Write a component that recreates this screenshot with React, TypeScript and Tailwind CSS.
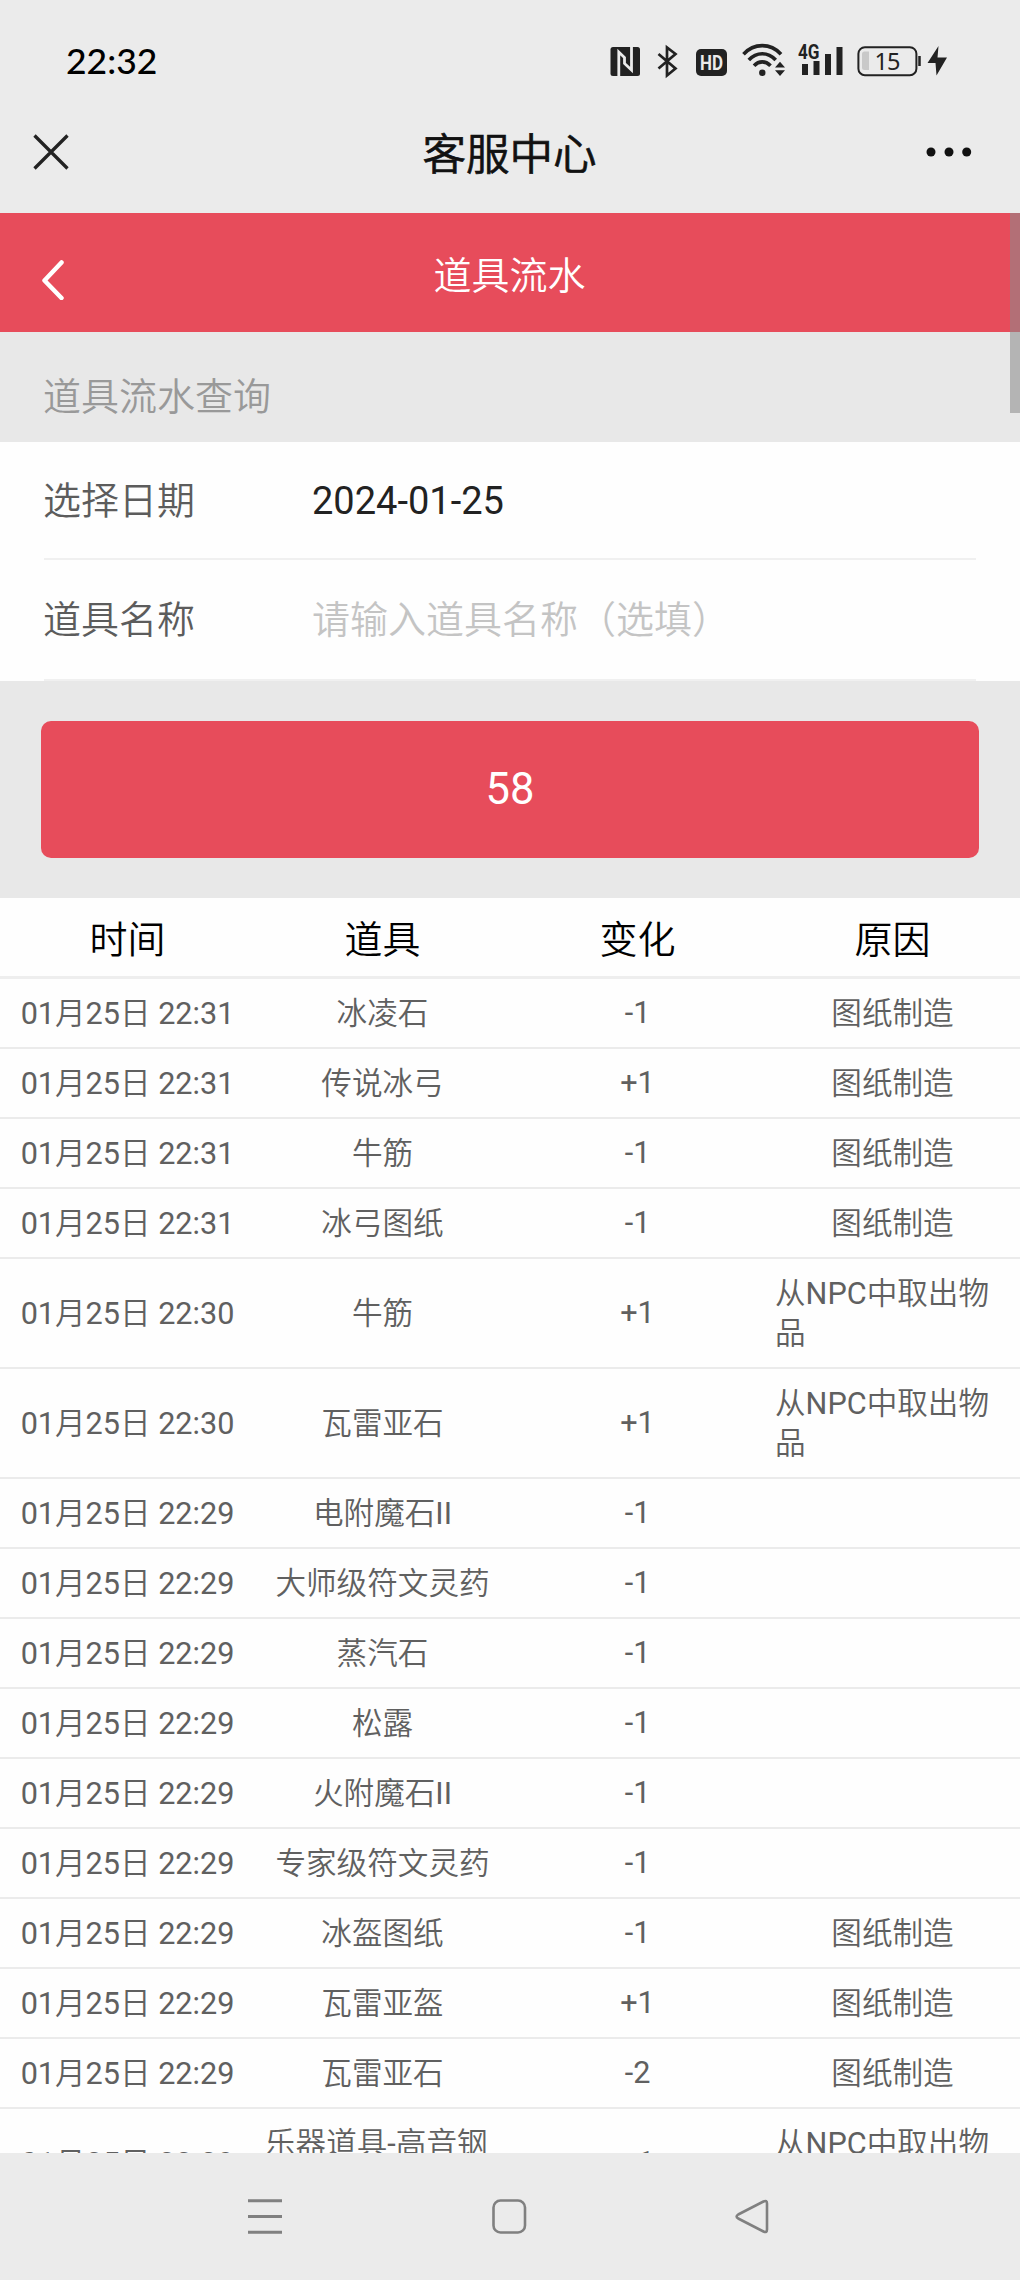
import type { ReactNode } from "react";

type Row = {
  time: string;
  item: string;
  change: string;
  reason?: string;
};

const rows: Row[] = [
  { time: "01月25日 22:31", item: "冰凌石", change: "-1", reason: "图纸制造" },
  { time: "01月25日 22:31", item: "传说冰弓", change: "+1", reason: "图纸制造" },
  { time: "01月25日 22:31", item: "牛筋", change: "-1", reason: "图纸制造" },
  { time: "01月25日 22:31", item: "冰弓图纸", change: "-1", reason: "图纸制造" },
  { time: "01月25日 22:30", item: "牛筋", change: "+1", reason: "从NPC中取出物品" },
  { time: "01月25日 22:30", item: "瓦雷亚石", change: "+1", reason: "从NPC中取出物品" },
  { time: "01月25日 22:29", item: "电附魔石II", change: "-1" },
  { time: "01月25日 22:29", item: "大师级符文灵药", change: "-1" },
  { time: "01月25日 22:29", item: "蒸汽石", change: "-1" },
  { time: "01月25日 22:29", item: "松露", change: "-1" },
  { time: "01月25日 22:29", item: "火附魔石II", change: "-1" },
  { time: "01月25日 22:29", item: "专家级符文灵药", change: "-1" },
  { time: "01月25日 22:29", item: "冰盔图纸", change: "-1", reason: "图纸制造" },
  { time: "01月25日 22:29", item: "瓦雷亚盔", change: "+1", reason: "图纸制造" },
  { time: "01月25日 22:29", item: "瓦雷亚石", change: "-2", reason: "图纸制造" },
  { time: "01月25日 22:29", item: "乐器道具-高音钢琴", change: "+1", reason: "从NPC中取出物品" },
];

function StatusIcons() {
  return (
    <div className="flex h-10 items-center text-[#222]">
      {/* NFC */}
      <svg width="30" height="40" viewBox="0 0 30 40">
        <rect x="0.5" y="7" width="29.5" height="29" rx="2.5" fill="currentColor" />
        <path d="M8.8 36V12L14.5 17.5V23.500L21.5 30V7" fill="none" stroke="#ebebeb" strokeWidth="2.8" />
      </svg>
      {/* Bluetooth */}
      <svg className="ml-[17px]" width="22" height="40" viewBox="0 0 22 40" fill="none" stroke="currentColor" strokeWidth="2.7">
        <path d="M1.5 14L18.5 28.5L10 35.5V7.5L18.5 14L1.5 28.5" />
      </svg>
      {/* HD */}
      <svg className="ml-[17px]" width="31" height="40" viewBox="0 0 31 40">
        <rect x="0" y="9" width="31" height="27" rx="5" fill="currentColor" />
        <text x="15.5" y="30" textAnchor="middle" fontSize="20.5" fontWeight="700" textLength="23" lengthAdjust="spacingAndGlyphs" fill="#ebebeb" className="font-[Roboto]">
          HD
        </text>
      </svg>
      {/* Wi-Fi */}
      <svg className="ml-[15px]" width="44" height="40" viewBox="0 0 44 40">
        <g fill="none" stroke="currentColor" strokeWidth="3.6">
          <path d="M1.5 14.2C12 2.8 28.5 2.8 39 14.2" />
          <path d="M6.8 20C14.5 11.6 26 11.6 33.7 20" />
          <path d="M12 25.8C17 20.6 23.5 20.6 28.5 25.8" />
        </g>
        <circle cx="20.3" cy="32.8" r="3.2" fill="currentColor" />
        <path d="M33 27.5L38 21.8L43 27.5ZM33 30.3L38 36L43 30.3Z" fill="currentColor" />
      </svg>
      {/* Signal */}
      <svg className="ml-3" width="46" height="40" viewBox="0 0 46 40" fill="currentColor">
        <text x="0" y="18.8" fontSize="20" fontWeight="700" textLength="21.5" lengthAdjust="spacingAndGlyphs" className="font-[Roboto]">
          4G
        </text>
        <rect x="4" y="24" width="6" height="11" />
        <rect x="15.5" y="21" width="6" height="14" />
        <rect x="27" y="14" width="6" height="21" />
        <rect x="38.5" y="7" width="6" height="28" />
      </svg>
      {/* Battery */}
      <svg className="ml-[13px]" width="91" height="40" viewBox="0 0 91 40">
        <rect x="1.4" y="7.2" width="58" height="28" rx="6.5" fill="none" stroke="currentColor" strokeWidth="2" />
        <path d="M12 11.5V30H7.5Q5 30 5 27.5V14Q5 11.5 7.5 11.5Z" fill="#c9c9c9" />
        <path d="M62.5 16V26" stroke="currentColor" strokeWidth="2.5" />
        <text x="30.5" y="29.5" textAnchor="middle" fontSize="23.5" textLength="26" fill="currentColor" className="font-['Noto_Sans']">
          15
        </text>
        <path d="M81.5 6L70.5 23H78.5L79.5 35.5L90 17.5H80.5Z" fill="currentColor" />
      </svg>
    </div>
  );
}

function FormRow({ label, children }: { label: string; children: ReactNode }) {
  return (
    <div className="flex items-center border-b-2 border-[#f0f0f0]">
      <span className="-ml-px w-[269px] pt-[2px] text-[#5c5c5c]">{label}</span>
      {children}
    </div>
  );
}

function Cell({ children }: { children?: ReactNode }) {
  return (
    <div className="flex w-1/4 items-center justify-center px-[10px]">
      <span>{children}</span>
    </div>
  );
}

export default function App() {
  return (
    <main className="flex h-[2280px] w-[1020px] flex-col overflow-hidden bg-[#ebebeb] font-[Roboto,'Noto_Sans_CJK_SC_DemiLight','Noto_Sans_CJK_SC',sans-serif]">
      <header className="h-[213px] shrink-0">
        <div className="flex h-[92px] items-end justify-between pr-[72px] pb-3 pl-[66px]">
          <span className="font-[Lato,sans-serif] text-[35.5px] leading-[38px] font-medium text-black">22:32</span>
          <StatusIcons />
        </div>
        <div className="flex h-[120px] items-center justify-between pr-[48px] pl-[33px]">
          <svg width="36" height="36" viewBox="0 0 36 36" fill="none" stroke="#222" strokeWidth="3.3">
            <path d="M1.5 1.5L34.5 34.5M34.5 1.5L1.5 34.5" />
          </svg>
          <h1 className="ml-6 pt-[7px] text-[43.5px] text-[#111] [-webkit-text-stroke:0.7px]">客服中心</h1>
          <svg width="46" height="10" viewBox="0 0 46 10" fill="#111">
            <circle cx="5" cy="5" r="4.5" />
            <circle cx="23" cy="5" r="4.5" />
            <circle cx="40.7" cy="5" r="4.5" />
          </svg>
        </div>
      </header>

      <div className="relative flex h-[1940px] shrink-0 flex-col overflow-hidden bg-[#e8e8e8] text-[38px]">
        <div className="absolute top-0 right-0 h-[200px] w-[10px] bg-[#8b8b8b]/56" />

        <div className="flex h-[119px] shrink-0 items-center bg-[#e74c5b] pl-[42px] text-white">
          <svg className="mt-[14px] w-[22px]" height="40" viewBox="0 0 22 40" fill="none" stroke="currentColor" strokeWidth="4.5" strokeLinecap="round" strokeLinejoin="round">
            <path d="M19.5 2.5L2.5 20.5L19.5 38" />
          </svg>
          <h2 className="mr-[65px] grow pt-[7px] text-center">道具流水</h2>
        </div>

        <p className="flex h-[110px] shrink-0 items-end px-[43px] pb-4 text-[#999]">道具流水查询</p>

        <div className="grid h-[239px] shrink-0 grid-rows-[118px_121px] bg-[#fefefe] px-[44px]">
          <FormRow label="选择日期">
            <span className="pt-[2px] text-[#222]">2024-01-25</span>
          </FormRow>
          <FormRow label="道具名称">
            <span className="pt-[2px] text-[#c4c4c4]">请输入道具名称（选填）</span>
          </FormRow>
        </div>

        <div className="shrink-0 px-[41px] py-[40px]">
          <button className="block h-[137px] w-full rounded-[10px] bg-[#e74c5b] text-[43.5px] text-white">58</button>
        </div>

        <div className="shrink-0 bg-[#fefefe]">
          <div className="flex h-[81px] border-b-3 border-[#eee] pt-[7px] text-black">
            <Cell>时间</Cell>
            <Cell>道具</Cell>
            <Cell>变化</Cell>
            <Cell>原因</Cell>
          </div>
          {rows.map((row, i) => (
            <div key={i} className="flex border-b-2 border-[#ebebeb] pt-[15px] pb-[13px] text-[30.6px] leading-10 text-[#606060]">
              <Cell>{row.time}</Cell>
              <Cell>{row.item}</Cell>
              <div className="-mt-[2px] flex w-1/4 items-center justify-center">{row.change}</div>
              <Cell>{row.reason}</Cell>
            </div>
          ))}
        </div>
      </div>

      <nav className="grow px-[248px]">
        <svg className="h-full w-[524px]" viewBox="0 0 524 127" fill="none" stroke="#808080" strokeWidth="2.6" strokeLinejoin="round">
          <path d="M0 47.7H34M0 63.5H34M0 79.3H34" strokeWidth="3" />
          <rect x="245.5" y="47.5" width="31.5" height="32" rx="7" />
          <path d="M490.2 61.5L515.5 48.5Q519 47 519 50.5V76.5Q519 80 515.5 78.5L490.2 65.5Q487 63.5 490.2 61.5Z" />
        </svg>
      </nav>
    </main>
  );
}
